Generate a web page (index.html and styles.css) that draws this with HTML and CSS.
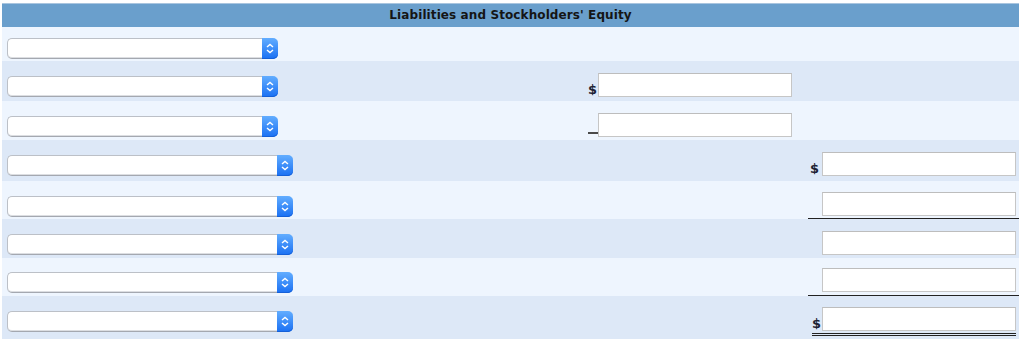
FILE: index.html
```html
<!DOCTYPE html>
<html lang="en">
<head>
  <meta charset="UTF-8" />
  <title>Liabilities and Stockholders' Equity</title>
  <link rel="stylesheet" href="styles.css">
</head>
<body>
  <table class="sheet">
    <colgroup>
      <col class="c-acct"><col class="c-cur1"><col class="c-amt1"><col class="c-cur2"><col class="c-amt2">
    </colgroup>
    <thead>
      <tr><th colspan="5">Liabilities and Stockholders' Equity</th></tr>
    </thead>
    <tbody>
      <tr>
        <td><div class="picker"><select></select><span class="arrows"><svg width="8" height="11" viewBox="0 0 8 11"><path d="M1 4 L4 1.5 L7 4 M1 7 L4 9.5 L7 7" fill="none" stroke="#fff" stroke-width="1.4"/></svg></span></div></td>
        <td></td><td></td><td></td><td></td>
      </tr>
      <tr>
        <td><div class="picker"><select></select><span class="arrows"><svg width="8" height="11" viewBox="0 0 8 11"><path d="M1 4 L4 1.5 L7 4 M1 7 L4 9.5 L7 7" fill="none" stroke="#fff" stroke-width="1.4"/></svg></span></div></td>
        <td class="cur">$</td><td><input type="text"></td><td></td><td></td>
      </tr>
      <tr>
        <td><div class="picker"><select></select><span class="arrows"><svg width="8" height="11" viewBox="0 0 8 11"><path d="M1 4 L4 1.5 L7 4 M1 7 L4 9.5 L7 7" fill="none" stroke="#fff" stroke-width="1.4"/></svg></span></div></td>
        <td class="cur"><span class="blank"></span></td><td><input type="text"></td><td></td><td></td>
      </tr>
      <tr>
        <td><div class="picker wide"><select></select><span class="arrows"><svg width="8" height="11" viewBox="0 0 8 11"><path d="M1 4 L4 1.5 L7 4 M1 7 L4 9.5 L7 7" fill="none" stroke="#fff" stroke-width="1.4"/></svg></span></div></td>
        <td></td><td></td><td class="cur">$</td><td><input type="text"></td>
      </tr>
      <tr>
        <td><div class="picker wide"><select></select><span class="arrows"><svg width="8" height="11" viewBox="0 0 8 11"><path d="M1 4 L4 1.5 L7 4 M1 7 L4 9.5 L7 7" fill="none" stroke="#fff" stroke-width="1.4"/></svg></span></div></td>
        <td></td><td></td><td class="cur rule"></td><td class="rule"><input type="text"></td>
      </tr>
      <tr>
        <td><div class="picker wide"><select></select><span class="arrows"><svg width="8" height="11" viewBox="0 0 8 11"><path d="M1 4 L4 1.5 L7 4 M1 7 L4 9.5 L7 7" fill="none" stroke="#fff" stroke-width="1.4"/></svg></span></div></td>
        <td></td><td></td><td></td><td><input type="text"></td>
      </tr>
      <tr>
        <td><div class="picker wide"><select></select><span class="arrows"><svg width="8" height="11" viewBox="0 0 8 11"><path d="M1 4 L4 1.5 L7 4 M1 7 L4 9.5 L7 7" fill="none" stroke="#fff" stroke-width="1.4"/></svg></span></div></td>
        <td></td><td></td><td class="cur rule"></td><td class="rule"><input type="text"></td>
      </tr>
      <tr>
        <td><div class="picker wide"><select></select><span class="arrows"><svg width="8" height="11" viewBox="0 0 8 11"><path d="M1 4 L4 1.5 L7 4 M1 7 L4 9.5 L7 7" fill="none" stroke="#fff" stroke-width="1.4"/></svg></span></div></td>
        <td></td><td></td><td class="cur"><div class="total lead">$</div></td><td><div class="total"><input type="text"></div></td>
      </tr>
    </tbody>
  </table>
</body>
</html>
```

FILE: styles.css
```css
* { box-sizing: border-box; }
body {
  margin: 0;
  background: #fff;
  font-family: "DejaVu Sans", Verdana, sans-serif;
  color: #1c1c1c;
}
.sheet {
  margin: 3px 0 0 2px;
  width: 1017px;
  table-layout: fixed;
  border-collapse: collapse;
  border-spacing: 0;
}
.c-acct { width: 586px; }
.c-cur1 { width: 10px; }
.c-amt1 { width: 210px; }
.c-cur2 { width: 14px; }
.c-amt2 { width: 197px; }

.sheet th {
  height: 23px;
  padding: 0 0 1px;
  background: #6a9fcc;
  border-top: 1px solid #a9c5df;
  font-size: 12px; font-weight: bold; text-align: center;
  color: #151515;
  letter-spacing: 0.1px;
}
.sheet td {
  padding: 0 0 4px 0;
  vertical-align: bottom;
}
.sheet td:first-child { padding-left: 5px; }
.sheet tbody tr:nth-child(odd) { background: #eef5fe; }
.sheet tbody tr:nth-child(even) { background: #dde8f7; }
.sheet tbody tr:nth-child(1) { height: 34px; }
.sheet tbody tr:nth-child(1) td { padding-bottom: 2px; }
.sheet tbody tr:nth-child(2) { height: 40px; }
.sheet tbody tr:nth-child(3) { height: 39px; }
.sheet tbody tr:nth-child(3) td { padding-bottom: 3px; }
.sheet tbody tr:nth-child(4) { height: 41px; }
.sheet tbody tr:nth-child(4) td { padding-bottom: 5px; }
.sheet tbody tr:nth-child(5) { height: 38px; }
.sheet tbody tr:nth-child(5) td { padding-bottom: 2px; }
.sheet tbody tr:nth-child(6) { height: 39px; }
.sheet tbody tr:nth-child(6) td { padding-bottom: 3px; }
.sheet tbody tr:nth-child(7) { height: 38px; }
.sheet tbody tr:nth-child(7) td { padding-bottom: 3px; }
.sheet tbody tr:nth-child(8) { height: 43px; }
.sheet tbody tr:nth-child(8) td { padding-bottom: 3px; }
.sheet tbody tr:nth-child(8) td:first-child { padding-bottom: 7px; }

/* dropdowns */
.picker {
  display: flex;
  width: 271px; height: 21px;
}
.picker.wide { width: 286px; }
.picker select {
  flex: 1;
  appearance: none; -webkit-appearance: none;
  margin: 0;
  background: #fff;
  border: 1px solid #bcc0c7;
  border-bottom-color: #a4a8b0;
  border-right: none;
  border-radius: 5px 0 0 5px;
  box-shadow: inset 0 -1px 0 #dcdee2;
}
.picker .arrows {
  width: 16px;
  display: flex; align-items: center; justify-content: center;
  background: linear-gradient(#62adff, #1a70f3);
  border-radius: 0 5px 5px 0;
  box-shadow: inset 0 -1px 0 #1560d8;
}

/* amounts */
.sheet td.cur {
  text-align: right;
  padding-right: 3px;
  font-size: 13px; font-weight: bold;
  color: #1d2333;
  line-height: 14px;
}
.blank {
  display: inline-block;
  width: 10px; height: 2px;
  margin-right: -3px;
  background: #4a4a4a;
}
.sheet input {
  display: block;
  width: 194px; height: 24px;
  margin: 0; padding: 0 3px;
  background: #fff;
  border: 1px solid #c6c6c6;
  border-top-color: #bdbdbd;
  border-radius: 0;
}
.rule { border-bottom: 1px solid #222; }
.total {
  width: 194px;
  padding-bottom: 2px;
  border-bottom: 3px double #222;
}
.total.lead {
  width: auto;
  margin-left: 4px;
  margin-right: -3px;
  padding-right: 3px;
}
```
